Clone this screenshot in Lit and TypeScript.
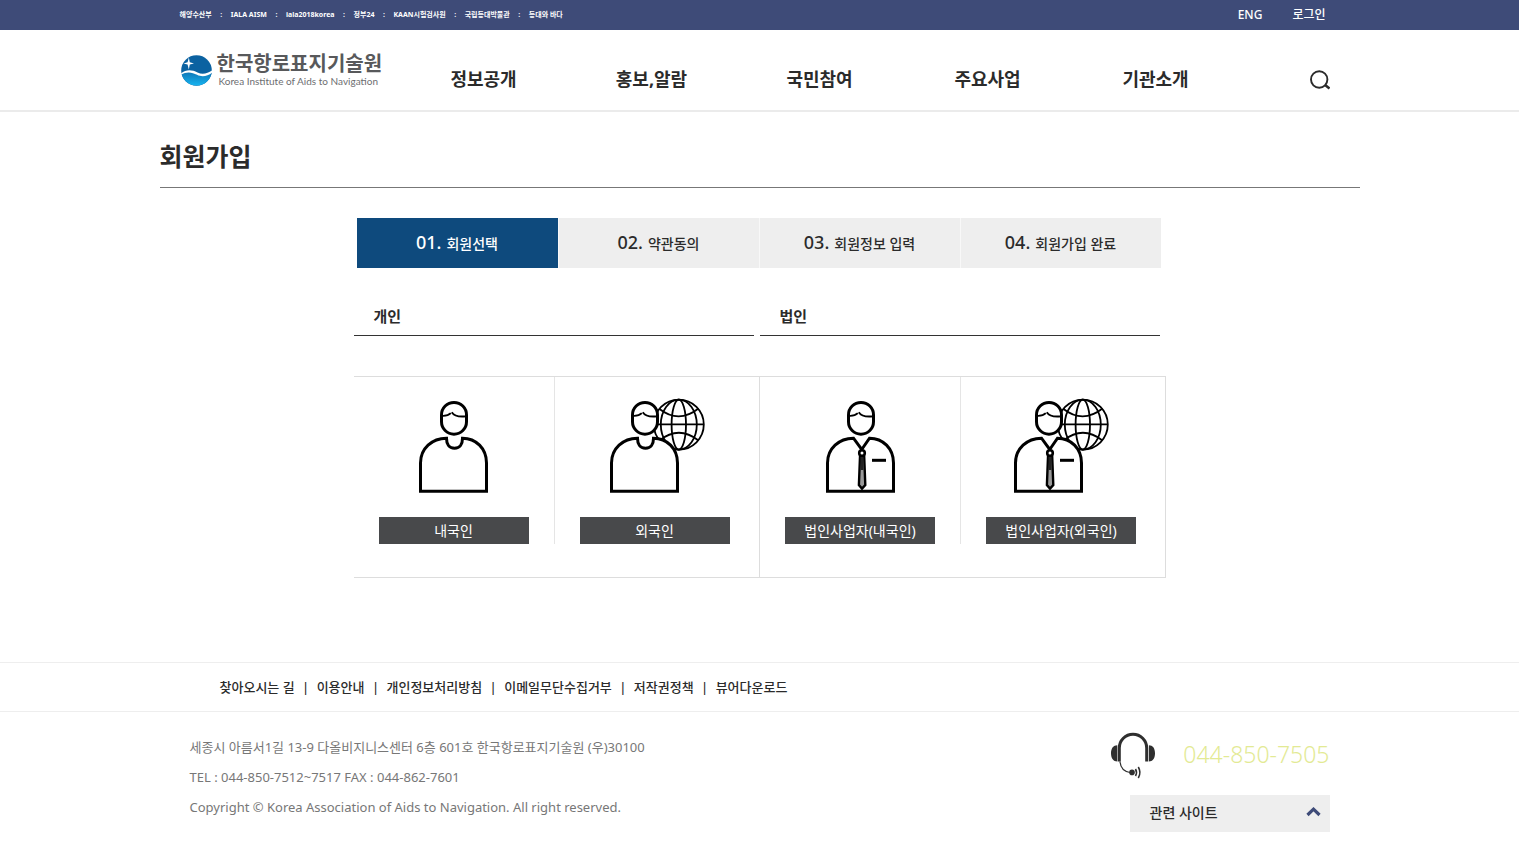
import { LitElement, html, svg, css, nothing } from "lit";
import { customElement, property } from "lit/decorators.js";

const TOP_LINKS = ["해양수산부", "IALA AISM", "iala2018korea", "정부24", "KAAN시험검사원", "국립등대박물관", "등대와 바다"];
const MENU = ["정보공개", "홍보,알람", "국민참여", "주요사업", "기관소개"];
const STEPS = ["회원선택", "약관동의", "회원정보 입력", "회원가입 완료"];
const GROUPS = [
  {
    title: "개인",
    options: [
      { label: "내국인", tie: false, globe: false },
      { label: "외국인", tie: false, globe: true },
    ],
  },
  {
    title: "법인",
    options: [
      { label: "법인사업자(내국인)", tie: true, globe: false },
      { label: "법인사업자(외국인)", tie: true, globe: true },
    ],
  },
];
const FOOTER_LINKS = ["찾아오시는 길", "이용안내", "개인정보처리방침", "이메일무단수집거부", "저작권정책", "뷰어다운로드"];

@customElement("member-icon")
export class MemberIcon extends LitElement {
  @property({ type: Boolean }) tie = false;
  @property({ type: Boolean }) globe = false;

  static styles = css`
    :host { display: block; height: 96px; }
    svg { display: block; margin: 0 auto; }
  `;

  render() {
    const left = this.globe && !this.tie ? 6 : 0;
    const width = (this.globe ? 95 : 69) + left;
    const body = this.tie
      ? "M1.5 93.3V65C1.5 50.5 13 40.2 27.5 40.2L35.7 51.5L43.5 40.2C57 40.2 67.5 50.5 67.5 65V93.3Z"
      : "M1.5 93.3V65C1.5 50.5 13 40.2 27.5 40.2C27.5 46 30 50.3 35.5 50.3S43.5 46 43.5 40.2C57 40.2 67.5 50.5 67.5 65V93.3Z";
    return html`
      <svg width=${width} height="96" viewBox="${-left} 0 ${width} 96" fill="none" stroke="#000" aria-hidden="true">
        ${this.globe
          ? svg`<g stroke-width="1.8">
              <circle cx="68.8" cy="26.6" r="25"/>
              <ellipse cx="68.8" cy="26.6" rx="7.2" ry="25"/>
              <ellipse cx="68.8" cy="26.6" rx="18" ry="25"/>
              <path d="M44 26.3H94M49.5 11Q68.8 26 88.5 10.5M49.5 42.5Q68.8 27 88.5 42.5"/>
            </g>`
          : nothing}
        <path d=${body} fill="#fff" stroke-width="3"/>
        <rect x="22.5" y="4.4" width="25" height="31.8" rx="12.5" fill="#fff" stroke-width="3"/>
        <path d="M23.5 17.8Q29 18 31.8 15.2M32.8 14.2Q36 19.5 47 18.3" stroke-width="1.8"/>
        ${this.tie
          ? svg`<path d="M34 58.5L32.9 87L36 90.6L39.3 87L38.2 58.5Z" fill="#999" stroke-width="2.4"/>
              <path d="M36 59V72" stroke="#222" stroke-width="3"/>
              <circle cx="36" cy="55" r="2.8" fill="#fff" stroke-width="2.6"/>
              <path d="M46 62.3H60" stroke-width="3"/>`
          : nothing}
      </svg>
    `;
  }
}

@customElement("app-root")
export class AppRoot extends LitElement {
  static styles = css`
    :host {
      display: block;
      background: #fff;
      color: #2b2b2b;
      font-family: "Noto Sans", "Noto Sans CJK KR", sans-serif;
      font-size: 14px;
    }
    * { box-sizing: border-box; }
    a { color: inherit; text-decoration: none; }
    ul, ol, p, h1, h2 { margin: 0; padding: 0; }
    ul, ol { list-style: none; }
    button { font: inherit; border: 0; border-radius: 0; cursor: pointer; }
    svg { display: block; }
    .wrap { max-width: 1200px; margin: 0 auto; }

    .topbar { background: #3e4b78; color: #fff; font-weight: 700; line-height: 30px; }
    .topbar .wrap { display: flex; justify-content: space-between; padding: 0 34px 0 20px; }
    .sites { display: flex; font-size: 7px; }
    .sites li + li::before { content: ":"; display: inline-block; width: 19px; text-align: center; }
    .account { display: flex; gap: 30px; font-size: 12px; font-weight: 500; }

    .header { border-bottom: 2px solid #ebebeb; }
    .header .wrap { display: flex; align-items: center; min-height: 80px; padding: 0 30px 0 21px; }
    .logo { display: flex; align-items: center; gap: 5px; flex: 0 0 219px; }
    .name { display: block; font-size: 20px; line-height: 22px; font-weight: 700; color: #58595b; white-space: nowrap; }
    .sub { display: block; padding-left: 2px; font-family: "Lato", sans-serif; font-size: 10px; line-height: 12px; color: #6d6e71; white-space: nowrap; }
    .menu { display: grid; grid-template-columns: repeat(5, 1fr); flex: 0 1 840px; padding-top: 18px; text-align: center; font-size: 18px; line-height: 26px; font-weight: 700; }
    .search { margin: 20px 0 0 auto; padding: 0; background: none; }

    .title { padding: 26px 0 13px; border-bottom: 1px solid #777; font-size: 25px; line-height: 36px; font-weight: 700; }
    .join { max-width: 812px; margin: 30px auto 84px; }
    .steps { display: grid; grid-template-columns: repeat(4, 1fr); margin: 0 5px 0 3px; }
    .step { display: flex; align-items: baseline; justify-content: center; gap: 5px; height: 50px; background: #eee; line-height: 48px; font-weight: 500; }
    .step + .step { border-left: 1px solid #f8f8f8; }
    .step.on { background: #0e4a7d; color: #fff; }
    .num { font-size: 18px; }
    .heads { display: grid; grid-template-columns: 1fr 1fr; gap: 6px; margin: 30px 6px 40px 0; }
    .heads h2 { padding: 0 20px 1px; border-bottom: 1px solid #333; font-size: 15px; line-height: 36px; font-weight: 700; }
    .groups { display: grid; grid-template-columns: 1fr 1fr; border: 1px solid #ddd; border-left: 0; }
    .group { display: flex; padding-bottom: 33px; }
    .group + .group { border-left: 1px solid #ddd; }
    .option { padding: 21px 25px 0; }
    .option:first-child { border-right: 1px solid #e5e5e5; }
    .pick { display: block; width: 150px; margin-top: 23px; padding: 0; background: #48494b; color: #fff; line-height: 27px; }

    .links { border: solid #eee; border-width: 1px 0; }
    .links ul { display: flex; flex-wrap: wrap; padding: 0 60px; font-size: 13px; line-height: 48px; font-weight: 500; }
    .links li + li::before { content: "|"; display: inline-block; width: 22px; text-align: center; }
    .info { display: flex; justify-content: space-between; padding: 20px 30px 10px; }
    .address { font-style: normal; font-size: 13px; line-height: 30px; color: #777; }
    .contact { display: flex; flex-direction: column; align-items: flex-end; gap: 15px; }
    .call { display: flex; align-items: center; gap: 27px; }
    .phone { font-size: 23px; line-height: 24px; padding-bottom: 4px; font-weight: 300; color: #e3ea94; }
    .related { display: flex; align-items: center; justify-content: space-between; width: 200px; height: 37px; padding: 0 9px 3px 20px; background: #eee; color: #2b2b2b; font-weight: 500; }
  `;

  render() {
    return html`
      <div class="topbar">
        <div class="wrap">
          <ul class="sites">${TOP_LINKS.map((t) => html`<li><a href="#">${t}</a></li>`)}</ul>
          <div class="account"><a href="#">ENG</a><a href="#">로그인</a></div>
        </div>
      </div>

      <header class="header">
        <div class="wrap">
          <a class="logo" href="#">
            <svg width="31" height="31" viewBox="0 0 31 31" aria-hidden="true">
              <defs>
                <linearGradient id="sea" x1="0" y1="0" x2="0" y2="1">
                  <stop offset="0" stop-color="#0f75b5"/>
                  <stop offset="1" stop-color="#16b4f0"/>
                </linearGradient>
              </defs>
              <circle cx="15.5" cy="15.5" r="15.3" fill="#0b62a1"/>
              <path d="M0.5 18.5C5 15.5 11 16.5 16 19.5C21 22.3 27 20 30.6 17.5A15.3 15.3 0 0 1 0.5 18.5Z" fill="url(#sea)"/>
              <path d="M0 18.6C5 14 11 14.5 16.5 17.5C21.5 20 26.5 18.5 31 15.5V17.8C27 21 21 22.5 16 19.8C11 17 5.5 16.2 0 19.8Z" fill="#fff"/>
              <path d="M7.8 2.5L8.8 7.2L13 8.4L8.8 9.6L7.8 14.5L6.6 9.6L2.5 8.4L6.6 7.2Z" fill="#fff"/>
            </svg>
            <span><span class="name">한국항로표지기술원</span><span class="sub">Korea Institute of Aids to Navigation</span></span>
          </a>
          <nav class="menu">${MENU.map((t) => html`<a href="#">${t}</a>`)}</nav>
          <button class="search" type="button" aria-label="검색">
            <svg width="20" height="20" viewBox="0 0 20 20" fill="none" stroke="#2b2b2b" aria-hidden="true">
              <circle cx="9.2" cy="9.5" r="8.2" stroke-width="1.9"/>
              <path d="M14.8 14.8L19.5 18.6" stroke-width="2.6"/>
            </svg>
          </button>
        </div>
      </header>

      <main class="wrap">
        <h1 class="title">회원가입</h1>
        <div class="join">
          <ol class="steps">
            ${STEPS.map((t, i) => html`<li class="step ${i === 0 ? "on" : ""}"><span class="num">0${i + 1}.</span><span>${t}</span></li>`)}
          </ol>
          <div class="heads">${GROUPS.map((g) => html`<h2>${g.title}</h2>`)}</div>
          <div class="groups">
            ${GROUPS.map((g) => html`
              <div class="group" role="group" aria-label=${g.title}>
                ${g.options.map((o) => html`
                  <div class="option">
                    <member-icon ?tie=${o.tie} ?globe=${o.globe}></member-icon>
                    <button class="pick" type="button">${o.label}</button>
                  </div>`)}
              </div>`)}
          </div>
        </div>
      </main>

      <footer>
        <nav class="links">
          <ul class="wrap">${FOOTER_LINKS.map((t) => html`<li><a href="#">${t}</a></li>`)}</ul>
        </nav>
        <div class="wrap info">
          <address class="address">
            <p>세종시 아름서1길 13-9 다올비지니스센터 6층 601호 한국항로표지기술원 (우)30100</p>
            <p>TEL : 044-850-7512~7517 FAX : 044-862-7601</p>
            <p>Copyright © Korea Association of Aids to Navigation. All right reserved.</p>
          </address>
          <div class="contact">
            <div class="call">
              <svg width="46" height="48" viewBox="0 0 46 48" fill="none" stroke="#2f2f2f" aria-hidden="true">
                <path d="M9.3 29.5V16A13.7 13.7 0 0 1 36.7 16V29.5" stroke-width="3"/>
                <path d="M7.3 13.2V29.5C3.5 29.5 1 26.5 1 21.3S3.5 13.2 7.3 13.2ZM38.9 13.2V29.5C42.7 29.5 45 26.5 45 21.3S42.7 13.2 38.9 13.2Z" fill="#2f2f2f" stroke="none"/>
                <path d="M10 29.5C10.5 36 14 39.5 20 40.5" stroke-width="1.2"/>
                <circle cx="22" cy="40.4" r="2.8" fill="#2f2f2f" stroke="none"/>
                <path d="M25.5 37Q27.5 40.5 25.5 44M28.3 35Q31.5 40.5 28.3 46" stroke-width="1.6"/>
              </svg>
              <a class="phone" href="tel:044-850-7505">044-850-7505</a>
            </div>
            <button class="related" type="button">
              관련 사이트
              <svg width="15" height="10" viewBox="0 0 15 10" fill="none" stroke="#3e4b78" stroke-width="3.2" aria-hidden="true">
                <path d="M1.5 8L7.5 2.2L13.5 8"/>
              </svg>
            </button>
          </div>
        </div>
      </footer>
    `;
  }
}
